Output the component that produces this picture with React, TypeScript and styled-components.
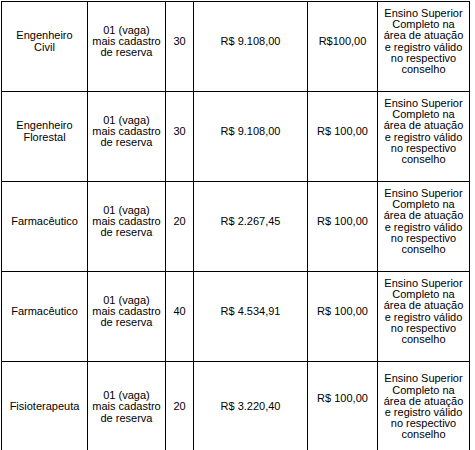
import styled, { createGlobalStyle } from 'styled-components';

interface Vaga {
  cargo: string;
  vagas: string;
  horas: string;
  salario: string;
  taxa: string;
  requisito: string;
  taxaLift?: number;
}

const GlobalStyle = createGlobalStyle`
  body {
    margin: 0;
    background-color: white;
    font-family: 'Liberation Sans', Arial, sans-serif;
    color: #000;
  }
`;

const Table = styled.div`
  display: grid;
  grid-template-columns: 85px 77px 27px 113px 69px 91px;
  grid-template-rows: repeat(4, 89px) 100px;
  gap: 1px;
  padding: 1px;
  margin: 1px 0 0 1px;
  width: max-content;
  background-color: #000;
`;

const Cell = styled.div<{ $lift?: number }>`
  display: flex;
  align-items: center;
  justify-content: center;
  padding: 0 4px ${(p) => 10 + (p.$lift || 0) * 2}px;
  background-color: white;
  font-size: 11px;
  line-height: 11.2px;
  text-align: center;
`;

const requisito = 'Ensino Superior Completo na área de atuação e registro válido no respectivo conselho';
const vagaTexto = '01 (vaga) mais cadastro de reserva';

const vagas: Vaga[] = [
  { cargo: 'Engenheiro Civil', vagas: vagaTexto, horas: '30', salario: 'R$ 9.108,00', taxa: 'R$100,00', requisito },
  { cargo: 'Engenheiro Florestal', vagas: vagaTexto, horas: '30', salario: 'R$ 9.108,00', taxa: 'R$ 100,00', requisito },
  { cargo: 'Farmacêutico', vagas: vagaTexto, horas: '20', salario: 'R$ 2.267,45', taxa: 'R$ 100,00', requisito },
  { cargo: 'Farmacêutico', vagas: vagaTexto, horas: '40', salario: 'R$ 4.534,91', taxa: 'R$ 100,00', requisito },
  { cargo: 'Fisioterapeuta', vagas: vagaTexto, horas: '20', salario: 'R$ 3.220,40', taxa: 'R$ 100,00', requisito, taxaLift: 8 },
];

const App = () => {
  return (
    <>
      <GlobalStyle />
      <Table>
        {vagas.map((v, i) => (
          <div key={i} style={{ display: 'contents' }}>
            <Cell>{v.cargo}</Cell>
            <Cell>{v.vagas}</Cell>
            <Cell>{v.horas}</Cell>
            <Cell>{v.salario}</Cell>
            <Cell $lift={v.taxaLift}>{v.taxa}</Cell>
            <Cell>{v.requisito}</Cell>
          </div>
        ))}
      </Table>
    </>
  );
};

export default App;
